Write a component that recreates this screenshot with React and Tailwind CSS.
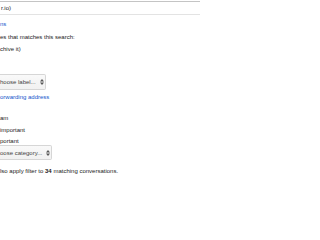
import React from "react";

function Arrows() {
  return (
    <svg width="4" height="6" viewBox="0 0 4 6" className="shrink-0">
      <path d="M2 0 L4 2.4 L0 2.4 Z" fill="#555" />
      <path d="M2 6 L4 3.6 L0 3.6 Z" fill="#555" />
    </svg>
  );
}

function FakeSelect({ label, width, height, arrowAt }) {
  return (
    <div
      className={`flex items-center ${width} ${height} border border-l-0 border-[#d6d6d6] rounded-r-[2px] bg-gradient-to-b from-[#f9f9f9] to-[#f1f1f1] text-[#444]`}
    >
      <span className="whitespace-nowrap">{label}</span>
      <span className={arrowAt}>
        <Arrows />
      </span>
    </div>
  );
}

export default function App() {
  return (
    <div className="w-[200px] h-[200px] overflow-hidden bg-white text-[6px] leading-[12px] text-[#222] font-['Liberation_Sans',Arial,sans-serif]">
      {/* search box */}
      <div className="mt-[1px] h-[14px] flex items-center border-t border-t-[#c4c4c4] border-b border-b-[#e3e3e3] pl-[1px]">
        <span>r.io)</span>
      </div>

      <div className="mt-[3px] text-[#1155cc] whitespace-nowrap">ns</div>
      <div className="mt-[1px] whitespace-nowrap">es that matches this search:</div>
      <div className="whitespace-nowrap">chive it)</div>

      {/* apply the label */}
      <div className="mt-[19px]">
        <FakeSelect label="hoose label..." width="w-[46px]" height="h-[16px]" arrowAt="ml-[4px]" />
      </div>
      <div className="mt-[1px] text-[#1155cc] whitespace-nowrap">orwarding address</div>

      <div className="mt-[9px] whitespace-nowrap">am</div>
      <div className="h-[11px] whitespace-nowrap">important</div>
      <div className="whitespace-nowrap">portant</div>

      {/* categorize as */}
      <div className="-mt-[2px]">
        <FakeSelect label="oose category..." width="w-[52px]" height="h-[15px]" arrowAt="ml-[4px]" />
      </div>

      <div className="mt-[5px] whitespace-nowrap">
        lso apply filter to <b>34</b> matching conversations.
      </div>
    </div>
  );
}
